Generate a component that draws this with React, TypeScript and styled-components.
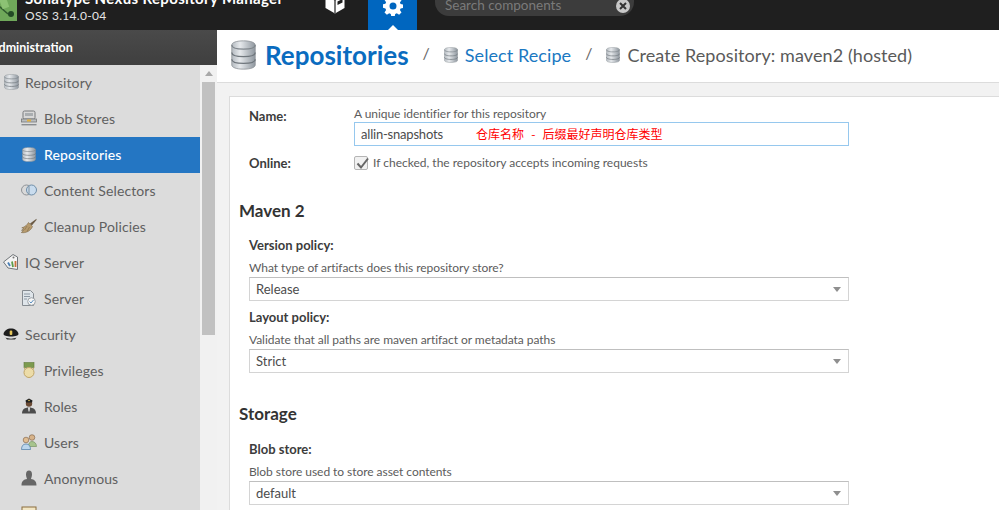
import styled, { createGlobalStyle } from "styled-components";

const GlobalStyle = createGlobalStyle`
    html, body {
        margin: 0;
        padding: 0;
        background: #fff;
        overflow: hidden;
    }
    * {
        box-sizing: border-box;
    }
`;

const font = `Lato, "Noto Sans", "Liberation Sans", sans-serif`;

function Db({ w, h, id }: { w: number; h: number; id: string }) {
    return (
        <svg width={w} height={h} viewBox="0 0 32 36" preserveAspectRatio="none">
            <defs>
                <linearGradient id={id} x1="0" x2="1" y1="0" y2="0">
                    <stop offset="0" stopColor="#b4bac0" />
                    <stop offset="0.35" stopColor="#e6e9ec" />
                    <stop offset="1" stopColor="#8f979f" />
                </linearGradient>
            </defs>
            <path d="M1 6c0-3 6-5 15-5s15 2 15 5v24c0 3-6 5-15 5S1 33 1 30z" fill={`url(#${id})`} stroke="#8c9297" strokeWidth="1" />
            <path d="M1 6c0 3 6 5 15 5s15-2 15-5" fill="none" stroke="#7f868c" strokeWidth="1.6" />
            <path d="M1 15c0 3 6 5 15 5s15-2 15-5" fill="none" stroke="#70777d" strokeWidth="1.6" />
            <path d="M1 23c0 3 6 5 15 5s15-2 15-5" fill="none" stroke="#70777d" strokeWidth="1.6" />
        </svg>
    );
}

function BlobIcon() {
    return (
        <svg width="16" height="16" viewBox="0 0 16 16">
            <rect x="2" y="1" width="12" height="8" rx="1.5" fill="#d8d8d8" stroke="#77797b" />
            <rect x="4" y="3" width="8" height="3" fill="#a9adb0" />
            <rect x="0.5" y="9" width="15" height="3" fill="#b9bcbe" stroke="#77797b" strokeWidth="0.8" />
            <rect x="6" y="9.5" width="4" height="2" fill="#e0b040" />
            <rect x="0.5" y="14" width="15" height="1.4" fill="#8a8d90" />
        </svg>
    );
}

function SelectorIcon() {
    return (
        <svg width="16" height="16" viewBox="0 0 16 16">
            <circle cx="5.5" cy="8" r="5" fill="#d9d9d9" stroke="#8e9296" />
            <circle cx="10.5" cy="8" r="5" fill="#c9dcee" stroke="#6f8ea8" />
            <path d="M8 4v8" stroke="#7f8f9c" />
        </svg>
    );
}

function BroomIcon() {
    return (
        <svg width="16" height="16" viewBox="0 0 16 16">
            <path d="M15.500 .8 9 5.500l1.800 2L15.500 2z" fill="#6b5a45" />
            <path d="M7.500 4.500 11.500 8.500C10 12.500 5 15.500 .3 14.500L2.500 12.500 .5 12.300 3 10.500 .8 9.800C4 9 6 7 7.500 4.500z" fill="#b79b6e" stroke="#7d6a4a" strokeWidth="0.6" />
            <path d="M6 8 3.500 12M8.500 9 6 13.500" stroke="#8a7450" strokeWidth="0.7" />
        </svg>
    );
}

function TagsIcon() {
    return (
        <svg width="16" height="16" viewBox="0 0 16 16">
            <path d="M10 .5 .5 8l4.500 6 9.500 1.500V3z" fill="#f4f4f4" stroke="#6f7478" />
            <circle cx="10.500" cy="3.500" r="1" fill="#777" />
            <path d="M5 8.500 7 12" stroke="#4a7fb5" strokeWidth="1.800" />
            <path d="M9 7.500l1 5.500" stroke="#5c9c4a" strokeWidth="1.800" />
            <path d="M12.500 7v6" stroke="#c8703c" strokeWidth="1.800" />
        </svg>
    );
}

function ServerDocIcon() {
    return (
        <svg width="16" height="16" viewBox="0 0 16 16">
            <path d="M1.500 .5h8l3 3v12h-11z" fill="#dfe5ea" stroke="#858b91" />
            <path d="M3 4h6M3 6.500h6M3 9h3" stroke="#8b97a3" />
            <circle cx="10.500" cy="11.500" r="3.800" fill="#f5f5f5" stroke="#9aa0a5" />
            <path d="M8.500 11.500l1.500 1.500 2.500-3" stroke="#5a8fc0" fill="none" />
        </svg>
    );
}

function HatIcon() {
    return (
        <svg width="16" height="16" viewBox="0 0 16 16">
            <path d="M.5 8C1 4.500 4.500 2.500 8 2.500s7 2 7.500 5.500c0 1.500-3 2.500-7.500 2.500S.500 9.500.500 8z" fill="#1d1d1d" />
            <path d="M2.500 11.500c3 1.500 8 1.500 11 0L12 13.500H4z" fill="#2c2c2c" />
            <rect x="6.700" y="4.500" width="2.600" height="4.500" rx="1" fill="#e6c65a" />
        </svg>
    );
}

function MedalIcon() {
    return (
        <svg width="16" height="16" viewBox="0 0 16 16">
            <rect x="3" y="0.500" width="10" height="5" fill="#7c9a4e" stroke="#5f7a3c" strokeWidth="0.6" />
            <path d="M3 5.500 4.500 8M13 5.500 11.500 8" stroke="#c9a862" />
            <circle cx="8" cy="10.500" r="5" fill="#ecdca8" stroke="#c0a566" />
        </svg>
    );
}

function OfficerIcon() {
    return (
        <svg width="16" height="16" viewBox="0 0 16 16">
            <path d="M1 15.500c0-4 2.500-6 7-6s7 2 7 6z" fill="#4c4c4c" />
            <path d="M7 9.500h2l-.5 4h-1z" fill="#e8e8e8" />
            <circle cx="8" cy="5.500" r="3.200" fill="#6b4a34" />
            <path d="M4.500 2.500 8 .5l3.500 2L11 4.500H5z" fill="#1e1e1e" />
            <circle cx="8" cy="2.500" r="0.800" fill="#e6c65a" />
        </svg>
    );
}

function UsersIcon() {
    return (
        <svg width="16" height="16" viewBox="0 0 16 16">
            <circle cx="11" cy="3.500" r="2.800" fill="#d7b38a" stroke="#7b5d42" strokeWidth="0.6" />
            <path d="M7.500 12.500c0-3 1-5 3.500-5s4.500 2 4.500 5z" fill="#a7c48e" stroke="#6d8a58" strokeWidth="0.6" />
            <circle cx="5" cy="6" r="2.800" fill="#e0bd92" stroke="#7b5d42" strokeWidth="0.6" />
            <path d="M.5 15.500c0-3.500 1.500-5.500 4.500-5.500s4.500 2 4.500 5.500z" fill="#bcd6ec" stroke="#4a7aa5" strokeWidth="0.7" />
        </svg>
    );
}

function AnonIcon() {
    return (
        <svg width="16" height="16" viewBox="0 0 16 16">
            <path d="M8 .5c2 0 3 1.500 3 4 0 2-.7 3.200-1 4.500 3 .7 5.500 1.500 5.500 6.500H.5c0-5 2.500-5.800 5.500-6.500-.3-1.300-1-2.500-1-4.500 0-2.500 1-4 3-4z" fill="#666" />
        </svg>
    );
}

function BookIcon() {
    return (
        <svg width="16" height="16" viewBox="0 0 16 16">
            <rect x="1" y="1" width="14" height="14" fill="#f2e6c4" stroke="#8a6d3c" />
        </svg>
    );
}

const items = [
    { label: "Repository", child: false, icon: <Db w={15} h={16} id="a1" /> },
    { label: "Blob Stores", child: true, icon: <BlobIcon /> },
    { label: "Repositories", child: true, active: true, icon: <Db w={14} h={15} id="a2" /> },
    { label: "Content Selectors", child: true, icon: <SelectorIcon /> },
    { label: "Cleanup Policies", child: true, icon: <BroomIcon /> },
    { label: "IQ Server", child: false, icon: <TagsIcon /> },
    { label: "Server", child: true, icon: <ServerDocIcon /> },
    { label: "Security", child: false, icon: <HatIcon /> },
    { label: "Privileges", child: true, icon: <MedalIcon /> },
    { label: "Roles", child: true, icon: <OfficerIcon /> },
    { label: "Users", child: true, icon: <UsersIcon /> },
    { label: "Anonymous", child: true, icon: <AnonIcon /> },
    { label: "LDAP", child: true, icon: <BookIcon /> },
];

function SelectField({ label, help, value }: { label: string; help: string; value: string }) {
    return (
        <Field>
            <FieldLabel>{label}</FieldLabel>
            <FieldHelp>{help}</FieldHelp>
            <SelectBox>
                {value}
                <Caret />
            </SelectBox>
        </Field>
    );
}

export default function App() {
    return (
        <Viewport>
            <GlobalStyle />
            <Frame>
                <TopBar>
                    <LogoBlock>
                        <svg width="27" height="35" viewBox="0 0 27 35">
                            <rect width="27" height="35" fill="#6fa85a" />
                            <path d="M0 12 18 28" stroke="#2f5a2e" strokeWidth="1.5" />
                            <path d="M8 0 16 22" stroke="#8cc274" strokeWidth="7" />
                            <circle cx="21" cy="28" r="3" fill="#234a26" />
                        </svg>
                    </LogoBlock>
                    <Brand>
                        <BrandName>Sonatype Nexus Repository Manager</BrandName>
                        <BrandVersion>OSS 3.14.0-04</BrandVersion>
                    </Brand>
                    <BoxButton>
                        <svg width="22" height="24" viewBox="0 0 22 24">
                            <path d="M11 1 20.500 5v13l-9.500 5.500L1.500 18V5z" fill="#fff" />
                            <path d="M2 5.500l9 4.500 9-4.500M11 10V23" stroke="#1f1f1f" strokeWidth="1.200" fill="none" />
                            <path d="M13.500 11.500 18.500 9v3.500l-5 2.500z" fill="#1f1f1f" />
                        </svg>
                    </BoxButton>
                    <GearTab>
                        <svg width="20" height="20" viewBox="0 0 20 20">
                            <path
                                fillRule="evenodd"
                                d="M8.300 0h3.400l.5 2.700 1.600.7 2.300-1.600 2.400 2.400-1.600 2.300.7 1.600 2.700.5v3.400l-2.700.5-.7 1.600 1.600 2.300-2.400 2.400-2.300-1.600-1.600.7-.5 2.700H8.300l-.5-2.700-1.600-.7-2.300 1.600-2.400-2.400 1.600-2.300-.7-1.600L-.3 11.700V8.300l2.700-.5.7-1.600-1.600-2.300 2.400-2.400 2.300 1.600 1.600-.7zM10 6.500a3.500 3.500 0 1 0 0 7 3.500 3.500 0 0 0 0-7z"
                                fill="#fff"
                            />
                        </svg>
                        <TabNotch />
                    </GearTab>
                    <SearchPill>
                        Search components
                        <ClearBadge>
                            <svg width="8" height="8" viewBox="0 0 8 8">
                                <path d="M1 1l6 6M7 1 1 7" stroke="#333" strokeWidth="2" />
                            </svg>
                        </ClearBadge>
                    </SearchPill>
                </TopBar>
                <Body>
                    <Sidebar>
                        <Nav>
                            <NavHeader>Administration</NavHeader>
                            {items.map((item) => (
                                <NavRow key={item.label} $child={item.child} $active={item.active}>
                                    <NavIcon>{item.icon}</NavIcon>
                                    {item.label}
                                </NavRow>
                            ))}
                        </Nav>
                        <ScrollTrack>
                            <ScrollUp />
                            <ScrollThumb />
                        </ScrollTrack>
                    </Sidebar>
                    <Main>
                        <TitleBar>
                            <Db w={25} h={30} id="t1" />
                            <Title>Repositories</Title>
                            <Slash>/</Slash>
                            <Db w={14} h={16} id="t2" />
                            <Crumb $link>Select Recipe</Crumb>
                            <Slash>/</Slash>
                            <Db w={14} h={16} id="t3" />
                            <Crumb>Create Repository: maven2 (hosted)</Crumb>
                        </TitleBar>
                        <Content>
                            <Card>
                                <NameRow>
                                    <NameLabel>Name:</NameLabel>
                                    <div>
                                        <Help>A unique identifier for this repository</Help>
                                        <NameInput>
                                            allin-snapshots
                                            <Annotation>{"仓库名称   -   后缀最好声明仓库类型"}</Annotation>
                                        </NameInput>
                                    </div>
                                </NameRow>
                                <OnlineRow>
                                    <FieldLabel>Online:</FieldLabel>
                                    <CheckLine>
                                        <CheckBox>
                                            <svg width="14" height="14" viewBox="0 0 14 14">
                                                <path d="M2.500 6.500 6 10.500 13 1.500" stroke="#666" strokeWidth="2" fill="none" />
                                            </svg>
                                        </CheckBox>
                                        If checked, the repository accepts incoming requests
                                    </CheckLine>
                                </OnlineRow>
                                <SectionTitle>Maven 2</SectionTitle>
                                <SelectField
                                    label="Version policy:"
                                    help="What type of artifacts does this repository store?"
                                    value="Release"
                                />
                                <SelectField
                                    label="Layout policy:"
                                    help="Validate that all paths are maven artifact or metadata paths"
                                    value="Strict"
                                />
                                <StorageTitle>Storage</StorageTitle>
                                <BlobField>
                                    <SelectField
                                        label="Blob store:"
                                        help="Blob store used to store asset contents"
                                        value="default"
                                    />
                                </BlobField>
                            </Card>
                        </Content>
                    </Main>
                </Body>
            </Frame>
        </Viewport>
    );
}

const Viewport = styled.div`
    width: 999px;
    height: 510px;
    overflow: hidden;
    font-family: ${font};
`;

const Frame = styled.div`
    width: 1009px;
    height: 524px;
    margin: -14px 0 0 -10px;
    display: flex;
    flex-direction: column;
`;

const TopBar = styled.header`
    height: 44px;
    flex: none;
    background: #1f1f1f;
    display: flex;
    align-items: flex-start;
`;

const LogoBlock = styled.div`
    width: 27px;
    height: 35px;
    line-height: 0;
`;

const Brand = styled.div`
    width: 300px;
    margin-left: 8px;
    color: #fff;
    padding-top: 4px;
`;

const BrandName = styled.div`
    font-size: 15px;
    font-weight: 700;
    letter-spacing: 0.35px;
    line-height: 16px;
    white-space: nowrap;
`;

const BrandVersion = styled.div`
    font-size: 12px;
    letter-spacing: 0.3px;
    line-height: 14px;
    margin-top: 3px;
    color: #e6e6e6;
`;

const BoxButton = styled.div`
    width: 49px;
    margin-left: -15px;
    padding-top: 4px;
    display: flex;
    justify-content: center;
`;

const GearTab = styled.div`
    position: relative;
    width: 49px;
    height: 44px;
    margin-left: 9px;
    background: #0066bf;
    padding-top: 10px;
    display: flex;
    justify-content: center;
    align-items: flex-start;
`;

const TabNotch = styled.div`
    position: absolute;
    left: 50%;
    bottom: 0;
    margin-left: -5px;
    border-left: 5px solid transparent;
    border-right: 5px solid transparent;
    border-bottom: 5px solid #fff;
`;

const SearchPill = styled.div`
    width: 199px;
    height: 30px;
    margin-left: 18px;
    padding: 11px 4px 0 10px;
    border-radius: 0 0 14px 14px;
    background: #3c3c3c;
    color: #7a7a7a;
    font-size: 13.500px;
    line-height: 16px;
    display: flex;
    justify-content: space-between;
    align-items: flex-start;
`;

const ClearBadge = styled.div`
    width: 14px;
    height: 14px;
    margin-top: 2px;
    border-radius: 50%;
    background: #c8c8c8;
    display: flex;
    align-items: center;
    justify-content: center;
`;

const Body = styled.div`
    flex: 1;
    display: flex;
    min-height: 0;
`;

const Sidebar = styled.aside`
    width: 227px;
    flex: none;
    display: flex;
    align-items: stretch;
    background: #f1f1f1;
    position: relative;
`;

const Nav = styled.nav`
    width: 210px;
    background: #dcdcdc;
    flex: none;
`;

const NavHeader = styled.div`
    height: 35px;
    margin-right: -17px;
    position: relative;
    z-index: 1;
    padding-top: 10px;
    background: linear-gradient(#4a4a4a, #3f3f3f);
    color: #fff;
    font-size: 12.500px;
    font-weight: 700;
    line-height: 16px;
    white-space: nowrap;
`;

const NavRow = styled.div<{ $child?: boolean; $active?: boolean }>`
    height: 36px;
    display: flex;
    align-items: center;
    padding-left: ${(p) => (p.$child ? "31px" : "13px")};
    padding-bottom: 2px;
    gap: ${(p) => (p.$child ? "7px" : "6px")};
    font-size: 14px;
    letter-spacing: 0.1px;
    color: ${(p) => (p.$active ? "#fff" : "#606060")};
    font-weight: ${(p) => (p.$active ? 500 : 400)};
    background: ${(p) => (p.$active ? "#2476c3" : "transparent")};
`;

const NavIcon = styled.span`
    width: 16px;
    height: 16px;
    display: flex;
    align-items: center;
    justify-content: center;
    flex: none;
`;

const ScrollTrack = styled.div`
    width: 17px;
    flex: none;
    padding-top: 35px;
    display: flex;
    flex-direction: column;
    align-items: center;
`;

const ScrollUp = styled.div`
    margin-top: 6px;
    border-left: 4px solid transparent;
    border-right: 4px solid transparent;
    border-bottom: 5px solid #a8a8a8;
`;

const ScrollThumb = styled.div`
    width: 13px;
    height: 253px;
    margin-top: 6px;
    background: #c1c1c1;
`;

const Main = styled.main`
    flex: 1;
    min-width: 0;
    display: flex;
    flex-direction: column;
`;

const TitleBar = styled.div`
    height: 53px;
    flex: none;
    background: #fff;
    border-bottom: 1px solid #dcdcdc;
    display: flex;
    align-items: center;
    padding-left: 14px;
    padding-bottom: 2px;
`;

const Title = styled.h1`
    margin: 0 0 0 9px;
    font-size: 26px;
    font-weight: 700;
    color: #0a6cbf;
`;

const Slash = styled.span`
    margin: 0 14px 6px 14px;
    font-size: 16px;
    color: #666;
`;

const Crumb = styled.span<{ $link?: boolean }>`
    margin-left: 7px;
    font-size: 18px;
    letter-spacing: 0.08px;
    color: ${(p) => (p.$link ? "#1a78c2" : "#5a5a5a")};
`;

const Content = styled.div`
    flex: 1;
    background: #f2f2f2;
    padding: 13px 0 0 12px;
    min-height: 0;
`;

const Card = styled.section`
    height: 100%;
    background: #fff;
    border-top: 1px solid #dcdcdc;
    border-left: 1px solid #dcdcdc;
    padding: 9px 0 0 19px;
    color: #555;
`;

const FieldLabel = styled.div`
    font-size: 13px;
    line-height: 16px;
    font-weight: 700;
    color: #3c3c3c;
`;

const NameLabel = styled(FieldLabel)`
    margin-top: 2px;
`;

const Help = styled.div`
    font-size: 12px;
    letter-spacing: -0.05px;
    line-height: 15px;
    color: #5c5c5c;
`;

const FieldHelp = styled(Help)`
    margin-top: 7px;
`;

const NameRow = styled.div`
    display: grid;
    grid-template-columns: 105px 495px;
`;

const NameInput = styled.div`
    position: relative;
    height: 24px;
    margin-top: 1px;
    padding-left: 6px;
    border: 1px solid #96c8ee;
    font-size: 13px;
    letter-spacing: -0.2px;
    line-height: 22px;
    color: #4c4c4c;
`;

const Annotation = styled.span`
    position: absolute;
    left: 121px;
    top: 0;
    font-family: "Noto Sans CJK SC", sans-serif;
    font-size: 12px;
    letter-spacing: 0;
    word-spacing: -0.3px;
    color: #f00;
    white-space: pre;
`;

const OnlineRow = styled.div`
    display: grid;
    grid-template-columns: 105px 495px;
    margin-top: 9px;
    align-items: center;
`;

const CheckLine = styled.div`
    display: flex;
    align-items: center;
    gap: 5px;
    font-size: 12px;
    line-height: 16px;
    color: #5c5c5c;
`;

const CheckBox = styled.div`
    width: 14px;
    height: 14px;
    border: 1px solid #b5b5b5;
    border-radius: 2px;
    background: #f1f1f1;
    line-height: 0;
`;

const SectionTitle = styled.h2`
    margin: 29px 0 0 -10px;
    font-size: 17px;
    line-height: 22px;
    font-weight: 700;
    color: #333;
`;

const StorageTitle = styled(SectionTitle)`
    margin-top: 30px;
`;

const BlobField = styled.div`
    padding-top: 1px;
`;

const Field = styled.div`
    width: 600px;
    margin-top: 15px;
    & + & {
        margin-top: 8px;
    }
`;

const SelectBox = styled.div`
    position: relative;
    height: 24px;
    margin-top: 2px;
    padding-left: 6px;
    border: 1px solid #d4d4d4;
    border-top-color: #bfbfbf;
    font-size: 13px;
    line-height: 22px;
    color: #4c4c4c;
`;

const Caret = styled.span`
    position: absolute;
    right: 7px;
    top: 9px;
    border-left: 4px solid transparent;
    border-right: 4px solid transparent;
    border-top: 5px solid #8f8f8f;
`;
